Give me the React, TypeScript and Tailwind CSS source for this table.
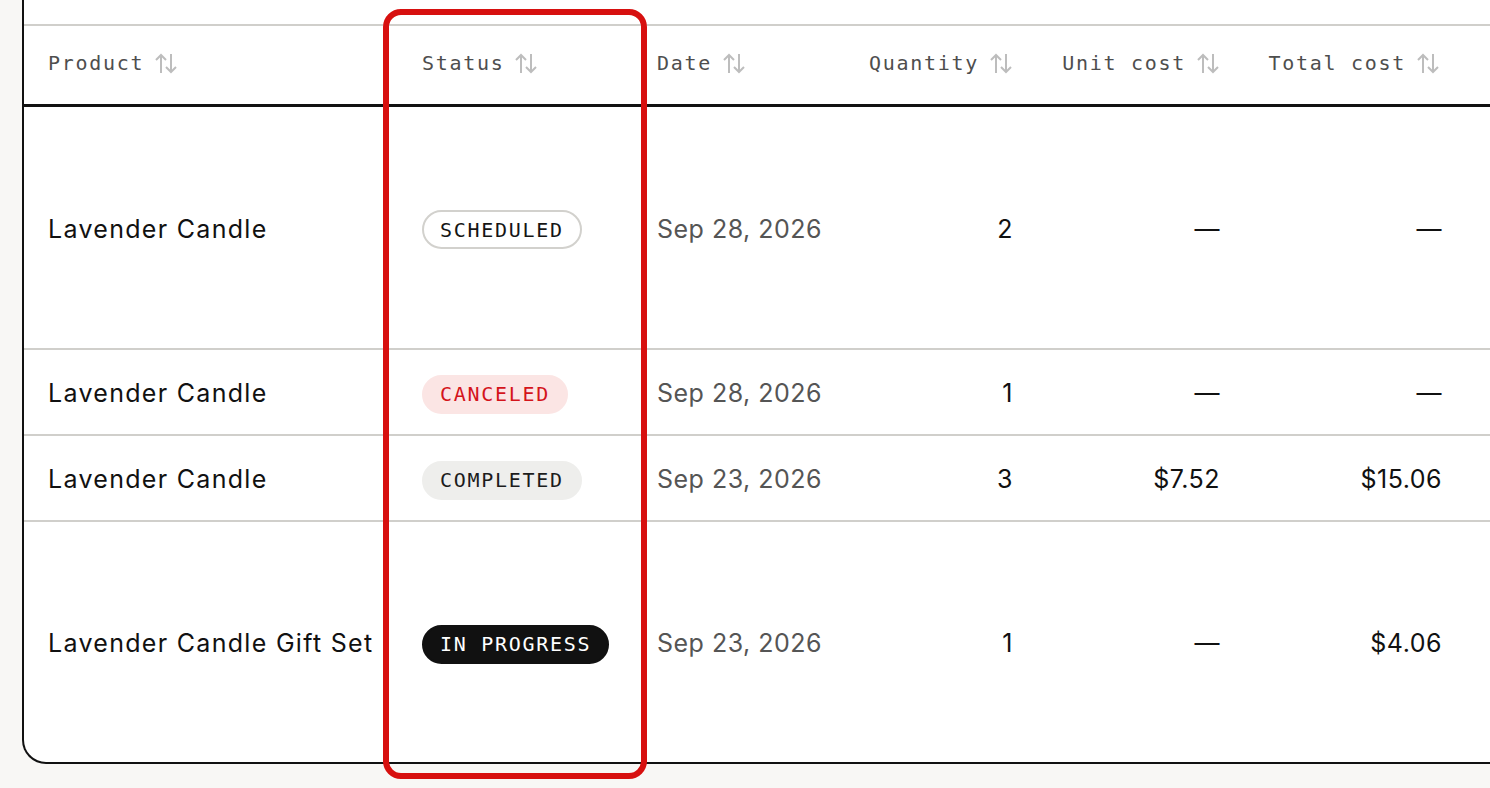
const cols = "grid grid-cols-[374px_235px_213px_191px_207px_220px_1fr]"

const mono = "font-['DejaVu_Sans_Mono',monospace] text-[20px] tracking-[1.7px] whitespace-nowrap"
const sans = "font-['Inter',sans-serif] text-[25px] whitespace-nowrap pt-1"

type Status = "SCHEDULED" | "CANCELED" | "COMPLETED" | "IN PROGRESS"

const rows: { product: string; status: Status; date: string; qty: string; unit: string; total: string; h: string }[] = [
  { product: "Lavender Candle", status: "SCHEDULED", date: "Sep 28, 2026", qty: "2", unit: "—", total: "—", h: "h-[243px]" },
  { product: "Lavender Candle", status: "CANCELED", date: "Sep 28, 2026", qty: "1", unit: "—", total: "—", h: "h-[86px]" },
  { product: "Lavender Candle", status: "COMPLETED", date: "Sep 23, 2026", qty: "3", unit: "$7.52", total: "$15.06", h: "h-[86px]" },
  { product: "Lavender Candle Gift Set", status: "IN PROGRESS", date: "Sep 23, 2026", qty: "1", unit: "—", total: "$4.06", h: "h-[240px]" },
]

const badgeStyle: Record<Status, string> = {
  SCHEDULED: "border-[#d2d1cd] bg-white text-[#151515]",
  CANCELED: "border-[#fbe5e4] bg-[#fbe5e4] text-[#d4141b]",
  COMPLETED: "border-[#eeeeec] bg-[#eeeeec] text-[#1c1c1c]",
  "IN PROGRESS": "border-[#111111] bg-[#111111] text-white",
}

function SortIcon() {
  return (
    <svg width="24" height="21" viewBox="0 0 24 21" fill="none" stroke="#bdbdbd" strokeWidth="2" className="shrink-0">
      <path d="M7 20V2M2 7l5-5 5 5" />
      <path d="M17 1v18M12 14l5 5 5-5" />
    </svg>
  )
}

function Head({ label, right }: { label: string; right?: boolean }) {
  return (
    <div className={`flex items-center gap-[10px] px-6 pb-1 ${right ? "justify-end" : ""}`}>
      <span className={`${mono} text-[#4e4e4e]`}>{label}</span>
      <SortIcon />
    </div>
  )
}

export default function App() {
  return (
    <div className="relative h-[788px] w-[1490px] overflow-hidden bg-[#f8f7f5]">
      <div className="ml-[22px] w-[1500px] rounded-bl-[24px] border-b-2 border-l-2 border-[#111] bg-white">
        <div className="h-[26px] border-b-2 border-[#d0cfcb]" />
        <div className={`${cols} h-[81px] border-b-[3px] border-[#111]`}>
          <Head label="Product" />
          <Head label="Status" />
          <Head label="Date" />
          <Head label="Quantity" right />
          <Head label="Unit cost" right />
          <Head label="Total cost" right />
          <div />
        </div>
        {rows.map((r, i) => (
          <div key={i} className={`${cols} ${r.h} ${i < rows.length - 1 ? "border-b-2 border-[#d0cfcb]" : ""} items-center`}>
            <div className={`${sans} tracking-[1.3px] px-6 text-[#111]`}>{r.product}</div>
            <div className="px-6 pt-1">
              <span className={`inline-flex h-[39px] items-center rounded-full border-2 px-4 ${mono} ${badgeStyle[r.status]}`}>
                {r.status}
              </span>
            </div>
            <div className={`${sans} tracking-[0.5px] px-6 text-[#555]`}>{r.date}</div>
            <div className={`${sans} tracking-[0.5px] px-6 text-right text-[#111]`}>{r.qty}</div>
            <div className={`${sans} tracking-[0.5px] px-6 text-right text-[#111]`}>{r.unit}</div>
            <div className={`${sans} tracking-[0.5px] pl-6 pr-[22px] text-right text-[#111]`}>{r.total}</div>
            <div />
          </div>
        ))}
      </div>
      <div className="pointer-events-none absolute left-[383px] top-[9px] h-[770px] w-[264px] rounded-[18px] border-[6px] border-[#d7100f]" />
    </div>
  )
}
